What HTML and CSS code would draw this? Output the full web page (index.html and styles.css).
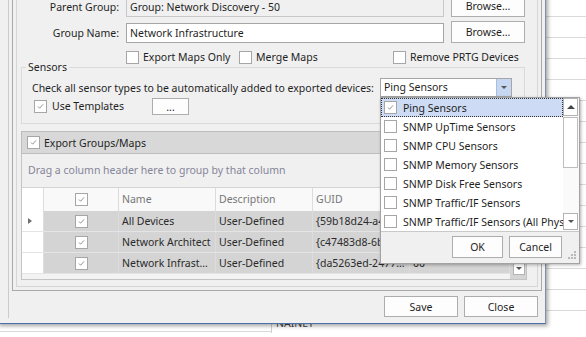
FILE: index.html
```html
<!DOCTYPE html>
<html lang="en">
<head>
    <meta charset="UTF-8">
    <meta name="viewport" content="width=device-width, initial-scale=1.0">
    <title>Export to PRTG</title>
    <link rel="stylesheet" href="styles.css">
</head>
<body>
    <div class="app">
        <div class="app-cell">NAINET</div>
    </div>

    <div class="dialog">
        <div class="body">
            <div class="panel">
                <div class="panel-inner">
                    <div class="form">
                        <label class="lbl">Parent Group:</label>
                        <div class="input readonly">Group: Network Discovery - 50</div>
                        <button class="btn">Browse...</button>

                        <label class="lbl">Group Name:</label>
                        <div class="input">Network Infrastructure</div>
                        <button class="btn">Browse...</button>
                    </div>

                    <div class="options">
                        <span class="opt"><span class="chk"></span>Export Maps Only</span>
                        <span class="opt"><span class="chk"></span>Merge Maps</span>
                        <span class="opt"><span class="chk"></span>Remove PRTG Devices</span>
                    </div>

                    <fieldset class="sensors">
                        <legend>Sensors</legend>
                        <div class="sensor-row">
                            <span>Check all sensor types to be automatically added to exported devices:</span>
                            <div class="combo">
                                <span class="combo-text">Ping Sensors</span>
                                <span class="combo-btn"><span class="arrow-down"></span></span>
                            </div>
                        </div>
                        <div class="tpl-row">
                            <span class="opt"><span class="chk on"><svg viewBox="0 0 13 13"><path d="M3.5 6.5 L5.5 8.5 L9.5 4"/></svg></span>Use Templates</span>
                            <button class="btn dots">...</button>
                        </div>
                    </fieldset>

                    <div class="export">
                        <div class="export-head">
                            <span class="chk on"><svg viewBox="0 0 13 13"><path d="M3.5 6.5 L5.5 8.5 L9.5 4"/></svg></span>Export Groups/Maps
                        </div>
                        <div class="grid">
                            <div class="group-panel">Drag a column header here to group by that column</div>
                            <div class="grid-row grid-head">
                                <div class="cell ind"></div>
                                <div class="cell ck"><span class="chk on"><svg viewBox="0 0 13 13"><path d="M3.5 6.5 L5.5 8.5 L9.5 4"/></svg></span></div>
                                <div class="cell">Name</div>
                                <div class="cell">Description</div>
                                <div class="cell">GUID</div>
                                <div class="cell"></div>
                                <div class="cell sb"></div>
                            </div>
                            <div class="grid-body">
                                <div class="rows">
                                    <div class="grid-row data">
                                        <div class="cell ind"><span class="row-arrow"></span></div>
                                        <div class="cell ck"><span class="chk on"><svg viewBox="0 0 13 13"><path d="M3.5 6.5 L5.5 8.5 L9.5 4"/></svg></span></div>
                                        <div class="cell">All Devices</div>
                                        <div class="cell">User-Defined</div>
                                        <div class="cell">{59b18d24-a4f2-4c1e-9d0a-2b6f0e7c31aa}</div>
                                        <div class="cell">00</div>
                                    </div>
                                    <div class="grid-row data">
                                        <div class="cell ind"></div>
                                        <div class="cell ck"><span class="chk on"><svg viewBox="0 0 13 13"><path d="M3.5 6.5 L5.5 8.5 L9.5 4"/></svg></span></div>
                                        <div class="cell">Network Architect</div>
                                        <div class="cell">User-Defined</div>
                                        <div class="cell">{c47483d8-6b1e-4f0d-8a2c-91e5d3b7f604}</div>
                                        <div class="cell">00</div>
                                    </div>
                                    <div class="grid-row data">
                                        <div class="cell ind"></div>
                                        <div class="cell ck"><span class="chk on"><svg viewBox="0 0 13 13"><path d="M3.5 6.5 L5.5 8.5 L9.5 4"/></svg></span></div>
                                        <div class="cell">Network Infrastructure</div>
                                        <div class="cell">User-Defined</div>
                                        <div class="cell">{da5263ed-2477-4b3c-a0e1-5f8d2c9b7e10}</div>
                                        <div class="cell">00</div>
                                    </div>
                                </div>
                                <div class="vscroll">
                                    <span class="sb-btn"><span class="arrow-down"></span></span>
                                </div>
                            </div>
                        </div>
                    </div>
                </div>
            </div>
            <div class="footer">
                <button class="btn">Save</button>
                <button class="btn">Close</button>
            </div>
        </div>
    </div>

    <div class="popup">
        <div class="popup-list">
            <div class="items">
                <div class="item active"><span class="chk on"><svg viewBox="0 0 13 13"><path d="M3.5 6.5 L5.5 8.5 L9.5 4"/></svg></span>Ping Sensors</div>
                <div class="item"><span class="chk"></span>SNMP UpTime Sensors</div>
                <div class="item"><span class="chk"></span>SNMP CPU Sensors</div>
                <div class="item"><span class="chk"></span>SNMP Memory Sensors</div>
                <div class="item"><span class="chk"></span>SNMP Disk Free Sensors</div>
                <div class="item"><span class="chk"></span>SNMP Traffic/IF Sensors</div>
                <div class="item"><span class="chk"></span>SNMP Traffic/IF Sensors (All Physical Ports)</div>
            </div>
            <div class="pscroll">
                <span class="sb-btn up"><span class="arrow-up"></span></span>
                <span class="thumb"></span>
                <span class="track"></span>
                <span class="sb-btn"><span class="arrow-down"></span></span>
            </div>
        </div>
        <div class="popup-foot">
            <button class="btn">OK</button>
            <button class="btn">Cancel</button>
            <svg class="grip" viewBox="0 0 9 9">
                <rect x="7" y="1" width="2" height="2"/>
                <rect x="4" y="4" width="2" height="2"/>
                <rect x="7" y="4" width="2" height="2"/>
                <rect x="1" y="7" width="2" height="2"/>
                <rect x="4" y="7" width="2" height="2"/>
                <rect x="7" y="7" width="2" height="2"/>
            </svg>
        </div>
    </div>
</body>
</html>
```

FILE: styles.css
```css
* {
    box-sizing: border-box;
}
body {
    margin: 0;
    width: 586px;
    height: 337px;
    overflow: hidden;
    position: relative;
    font-family: "Noto Sans", sans-serif;
    font-size: 10.5px;
    color: #1f1f1f;
    background: #fff;
}
button {
    font: inherit;
    color: inherit;
}

/* application window behind the dialog */
.app {
    position: absolute;
    inset: 0;
    padding: 314px 0 0 271px;
    background-color: #fff;
    background-image: repeating-linear-gradient(to bottom, transparent 0 20px, #d9d9d9 20px 21px);
    background-position: 0 -4px;
}
.app-cell {
    height: 19px;
    border-left: 1px solid #d0d0d0;
    padding-left: 4px;
    background: #fff;
    color: #444;
    line-height: 19px;
}

/* dialog */
.dialog {
    position: absolute;
    left: -1px;
    top: -30px;
    width: 547px;
    height: 354px;
    display: flex;
    padding: 0 0 5px 9px;
    background: #f0f0f0;
    border-right: 1px solid #7d8ea6;
    border-bottom: 1px solid #4a70a8;
    box-shadow: 1px 1px 4px 1px rgba(0, 0, 0, 0.35);
}
.body {
    flex: 1;
    display: flex;
    flex-direction: column;
    border-left: 1px solid #cbcbcb;
    padding: 0 3px 0 3px;
}
.panel {
    height: 321px;
    border: 1px solid #a9a9a9;
    padding: 3px;
}
.panel-inner {
    height: 100%;
    border: 1px solid #d6d6d6;
}

.form {
    display: grid;
    grid-template-columns: 102px 318px 74px;
    grid-auto-rows: 22px;
    column-gap: 7px;
    row-gap: 4px;
    margin-top: 20px;
}
.lbl {
    align-self: center;
    text-align: right;
    padding-top: 1px;
}
.input {
    align-self: end;
    height: 20px;
    line-height: 18px;
    border: 1px solid #a6a6a6;
    background: #fff;
    padding: 0 3px;
    white-space: nowrap;
    overflow: hidden;
}
.input.readonly {
    background: #f0f0f0;
    border-color: #c8c8c8;
}
.btn {
    height: 22px;
    padding: 0;
    border: 1px solid #adadad;
    background: #fdfdfd;
    text-align: center;
}

.options {
    display: grid;
    grid-template-columns: 113px 154px auto;
    height: 13px;
    margin-top: 8px;
    padding-left: 109px;
}
.opt {
    display: flex;
    align-items: center;
    gap: 4px;
    line-height: 13px;
    white-space: nowrap;
}
.chk {
    flex: none;
    width: 13px;
    height: 13px;
    border: 1px solid #a6a6a6;
    background: #fff;
    display: inline-block;
}
.chk svg {
    display: block;
    width: 11px;
    height: 11px;
    fill: none;
    stroke: #8a8a8a;
    stroke-width: 1.1;
}

.sensors {
    margin: -4px 0 0 4px;
    width: 504px;
    padding: 0 12px 8px 0;
    border: 1px solid #dadada;
}
.sensors legend {
    margin-left: 4px;
    padding: 0 2px;
    line-height: 15px;
}
.sensor-row {
    display: flex;
    align-items: center;
    height: 19px;
    margin-top: 3px;
    padding-left: 10px;
    white-space: nowrap;
}
.combo {
    margin-left: auto;
    width: 132px;
    height: 19px;
    display: flex;
    border: 1px solid #a6a6a6;
    background: #fff;
}
.combo-text {
    flex: 1;
    padding-left: 3px;
    line-height: 17px;
}
.combo-btn {
    width: 15px;
    display: flex;
    align-items: center;
    justify-content: center;
    background: #c6d7f1;
    border-left: 1px solid #a9bedd;
}
.arrow-down {
    width: 0;
    height: 0;
    border-left: 3px solid transparent;
    border-right: 3px solid transparent;
    border-top: 3px solid #555;
}
.arrow-up {
    width: 0;
    height: 0;
    border-left: 4px solid transparent;
    border-right: 4px solid transparent;
    border-bottom: 4px solid #444;
}
.tpl-row {
    display: flex;
    align-items: center;
    height: 17px;
    margin-top: 1px;
    padding-left: 12px;
}
.tpl-row .opt {
    width: 118px;
    gap: 5px;
}
.btn.dots {
    width: 37px;
    height: 17px;
    line-height: 10px;
}

/* export groups / maps */
.export {
    margin: 7px 0 0 4px;
    width: 506px;
}
.export-head {
    height: 23px;
    display: flex;
    align-items: center;
    gap: 4px;
    padding-left: 5px;
    background: #d8d8d8;
    border: 1px solid #bdbdbd;
}
.grid {
    border: 1px solid #c4c4c4;
    border-top: 0;
}
.group-panel {
    height: 34px;
    padding: 0 0 2px 6px;
    display: flex;
    align-items: center;
    color: #85859a;
    border-bottom: 1px solid #d4d4d4;
}
.grid-row {
    display: grid;
    grid-template-columns: 22px 75px 97px 97px 97px 100px;
}
.grid-head {
    grid-template-columns: 22px 75px 97px 97px 97px 100px 16px;
    height: 23px;
    background: #f9f9f9;
    color: #777;
}
.cell {
    display: flex;
    align-items: center;
    padding: 0 3px;
    border-right: 1px solid #dcdcdc;
    white-space: nowrap;
    overflow: hidden;
    min-width: 0;
}
.cell:not(.ind):not(.ck) {
    display: block;
    line-height: 20px;
    text-overflow: ellipsis;
}
.grid-head .cell:not(.ind):not(.ck) {
    line-height: 22px;
}
.cell.ind {
    background: #fff;
    justify-content: center;
    padding: 0 6px 0 0;
}
.cell.ck {
    justify-content: center;
}
.grid-head .cell.sb {
    border-right: 0;
}
.grid-body {
    height: 68px;
    display: flex;
    background: #f3f3f3;
}
.rows {
    flex: 1;
}
.grid-row.data {
    height: 21px;
    background: #d4d4d4;
    border-bottom: 1px solid #e4e4e4;
    color: #2a2a2a;
}
.row-arrow {
    width: 0;
    height: 0;
    border-top: 3.5px solid transparent;
    border-bottom: 3.5px solid transparent;
    border-left: 4px solid #6f6f6f;
}
.vscroll {
    width: 16px;
    padding: 0 1px 4px 3px;
    display: flex;
    flex-direction: column;
    justify-content: flex-end;
    background: #d4d4d4;
}
.sb-btn {
    height: 13px;
    display: flex;
    align-items: center;
    justify-content: center;
    background: #fff;
    border: 1px solid #b3b3b3;
}

.footer {
    display: flex;
    justify-content: flex-end;
    gap: 6px;
    margin-top: 5px;
    padding-right: 4px;
}
.footer .btn {
    width: 74px;
    height: 21px;
}

/* sensor type dropdown */
.popup {
    position: absolute;
    left: 380px;
    top: 97px;
    width: 200px;
    height: 167px;
    background: #f0f0f0;
    border: 1px solid #a3a3a3;
    box-shadow: 1px 1px 3px rgba(0, 0, 0, 0.3);
}
.popup-list {
    height: 134px;
    display: flex;
    background: #fff;
    border-bottom: 1px solid #c9c9c9;
}
.items {
    flex: 1;
    overflow: hidden;
}
.item {
    height: 19px;
    display: flex;
    align-items: center;
    gap: 6px;
    padding-left: 3px;
    white-space: nowrap;
}
.item.active {
    background: #cddcf4;
    border: 1px dotted #333;
    padding-left: 2px;
}
.pscroll {
    width: 16px;
    display: flex;
    flex-direction: column;
    padding: 0 1px 1px 0;
    background: #fafafa;
}
.pscroll .sb-btn {
    height: 17px;
}
.pscroll .sb-btn.up {
    height: 18px;
}
.thumb {
    height: 51px;
    margin-top: 1px;
    background: #fff;
    border: 1px solid #bdbdbd;
}
.track {
    flex: 1;
}
.popup-foot {
    position: relative;
    height: 31px;
    display: flex;
    justify-content: flex-end;
    gap: 6px;
    padding: 4px 17px 0 0;
}
.popup-foot .btn {
    height: 22px;
    width: 51px;
}
.popup-foot .btn + .btn {
    width: 53px;
}
.grip {
    position: absolute;
    right: 3px;
    bottom: 4px;
    width: 9px;
    height: 9px;
    fill: #b9b9b9;
}
```
